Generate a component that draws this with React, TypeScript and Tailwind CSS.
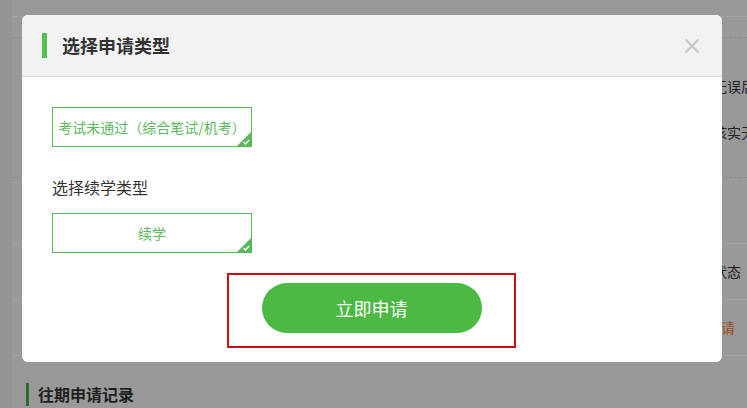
import { useState } from "react";

const font = { fontFamily: '"Noto Sans CJK SC", "Noto Sans", sans-serif' };

function CornerCheck() {
  return (
    <svg className="absolute right-0 bottom-0" width="14" height="14" viewBox="0 0 14 14">
      <polygon points="14,0 14,14 0,14" fill="#5cb85c" />
      <path d="M6.5 10 L8.5 12 L12 8" fill="none" stroke="#fff" strokeWidth="1.3" />
    </svg>
  );
}

function Option({ label }: { label: string }) {
  return (
    <div className="relative flex h-[40px] w-[200px] items-center justify-center border border-[#5cb85c] text-[14px] whitespace-nowrap text-[#5cb85c]">
      {label}
      <CornerCheck />
    </div>
  );
}

export default function App() {
  const [open] = useState(true);

  return (
    <div className="relative h-[408px] w-[747px] overflow-hidden bg-[#999999]" style={font}>
      {/* page behind the mask */}
      <div className="flex h-full">
        <div className="w-[12px] shrink-0 bg-[#959595]" />
        <div className="flex flex-1 flex-col">
          <div className="h-[17px] border-b border-[#a3a3a3]" />
          <div className="h-[21px] border-b border-dashed border-[#8a8a8a]" />
          <div className="flex h-[58px] items-end pl-[701px] text-[14px] leading-[20px] whitespace-nowrap text-[#222]">
            无误后请提交
          </div>
          <div className="flex h-[46px] items-end pl-[701px] text-[14px] leading-[20px] whitespace-nowrap text-[#222]">
            核实无误
          </div>
          <div className="h-[36px] border-b border-dashed border-[#7f947f]" />
          <div className="h-[66px] border-b border-[#a3a3a3]" />
          <div className="flex h-[56px] items-center border-b border-[#a3a3a3] pl-[673px] text-[14px] whitespace-nowrap text-[#222]">
            申请状态
          </div>
          <div className="flex h-[56px] items-center border-b border-[#a3a3a3] pl-[695px] text-[14px] whitespace-nowrap text-[#9a4f1c]">
            申请
          </div>
          <div className="flex items-center gap-[9px] pt-[27px] pl-[14px]">
            <div className="h-[23px] w-[3px] bg-[#2f6a2f]" />
            <span className="text-[16px] leading-[23px] font-bold text-[#1f1f1f]">往期申请记录</span>
          </div>
        </div>
      </div>

      {/* dialog */}
      {open && (
        <div className="absolute top-[15px] left-[22px] flex h-[347px] w-[700px] flex-col overflow-hidden rounded-[6px] bg-white">
          <div className="flex h-[62px] shrink-0 items-center border-b border-[#dddddd] bg-[#f2f2f2] pr-[22px] pl-[20px]">
            <div className="h-[25px] w-[5px] bg-[#52c14f]" />
            <h2 className="ml-[15px] flex-1 text-[18px] font-bold text-[#333]">选择申请类型</h2>
            <svg width="16" height="16" viewBox="0 0 16 16">
              <path d="M1.5 1.5 L14.5 14.5 M14.5 1.5 L1.5 14.5" stroke="#c9c9c9" strokeWidth="2.4" />
            </svg>
          </div>

          <div className="flex flex-col px-[30px] pt-[30px]">
            <Option label="考试未通过（综合笔试/机考）" />
            <p className="mt-[28px] text-[16px] leading-[24px] text-[#333]">选择续学类型</p>
            <div className="mt-[14px]">
              <Option label="续学" />
            </div>
            <div className="mt-[20px] ml-[175px] flex h-[75px] w-[289px] justify-center border-2 border-[#cc0f0f] pt-[8px]">
              <button className="h-[50px] w-[220px] rounded-full bg-[#4cb944] text-[18px] text-white">
                立即申请
              </button>
            </div>
          </div>
        </div>
      )}
    </div>
  );
}
